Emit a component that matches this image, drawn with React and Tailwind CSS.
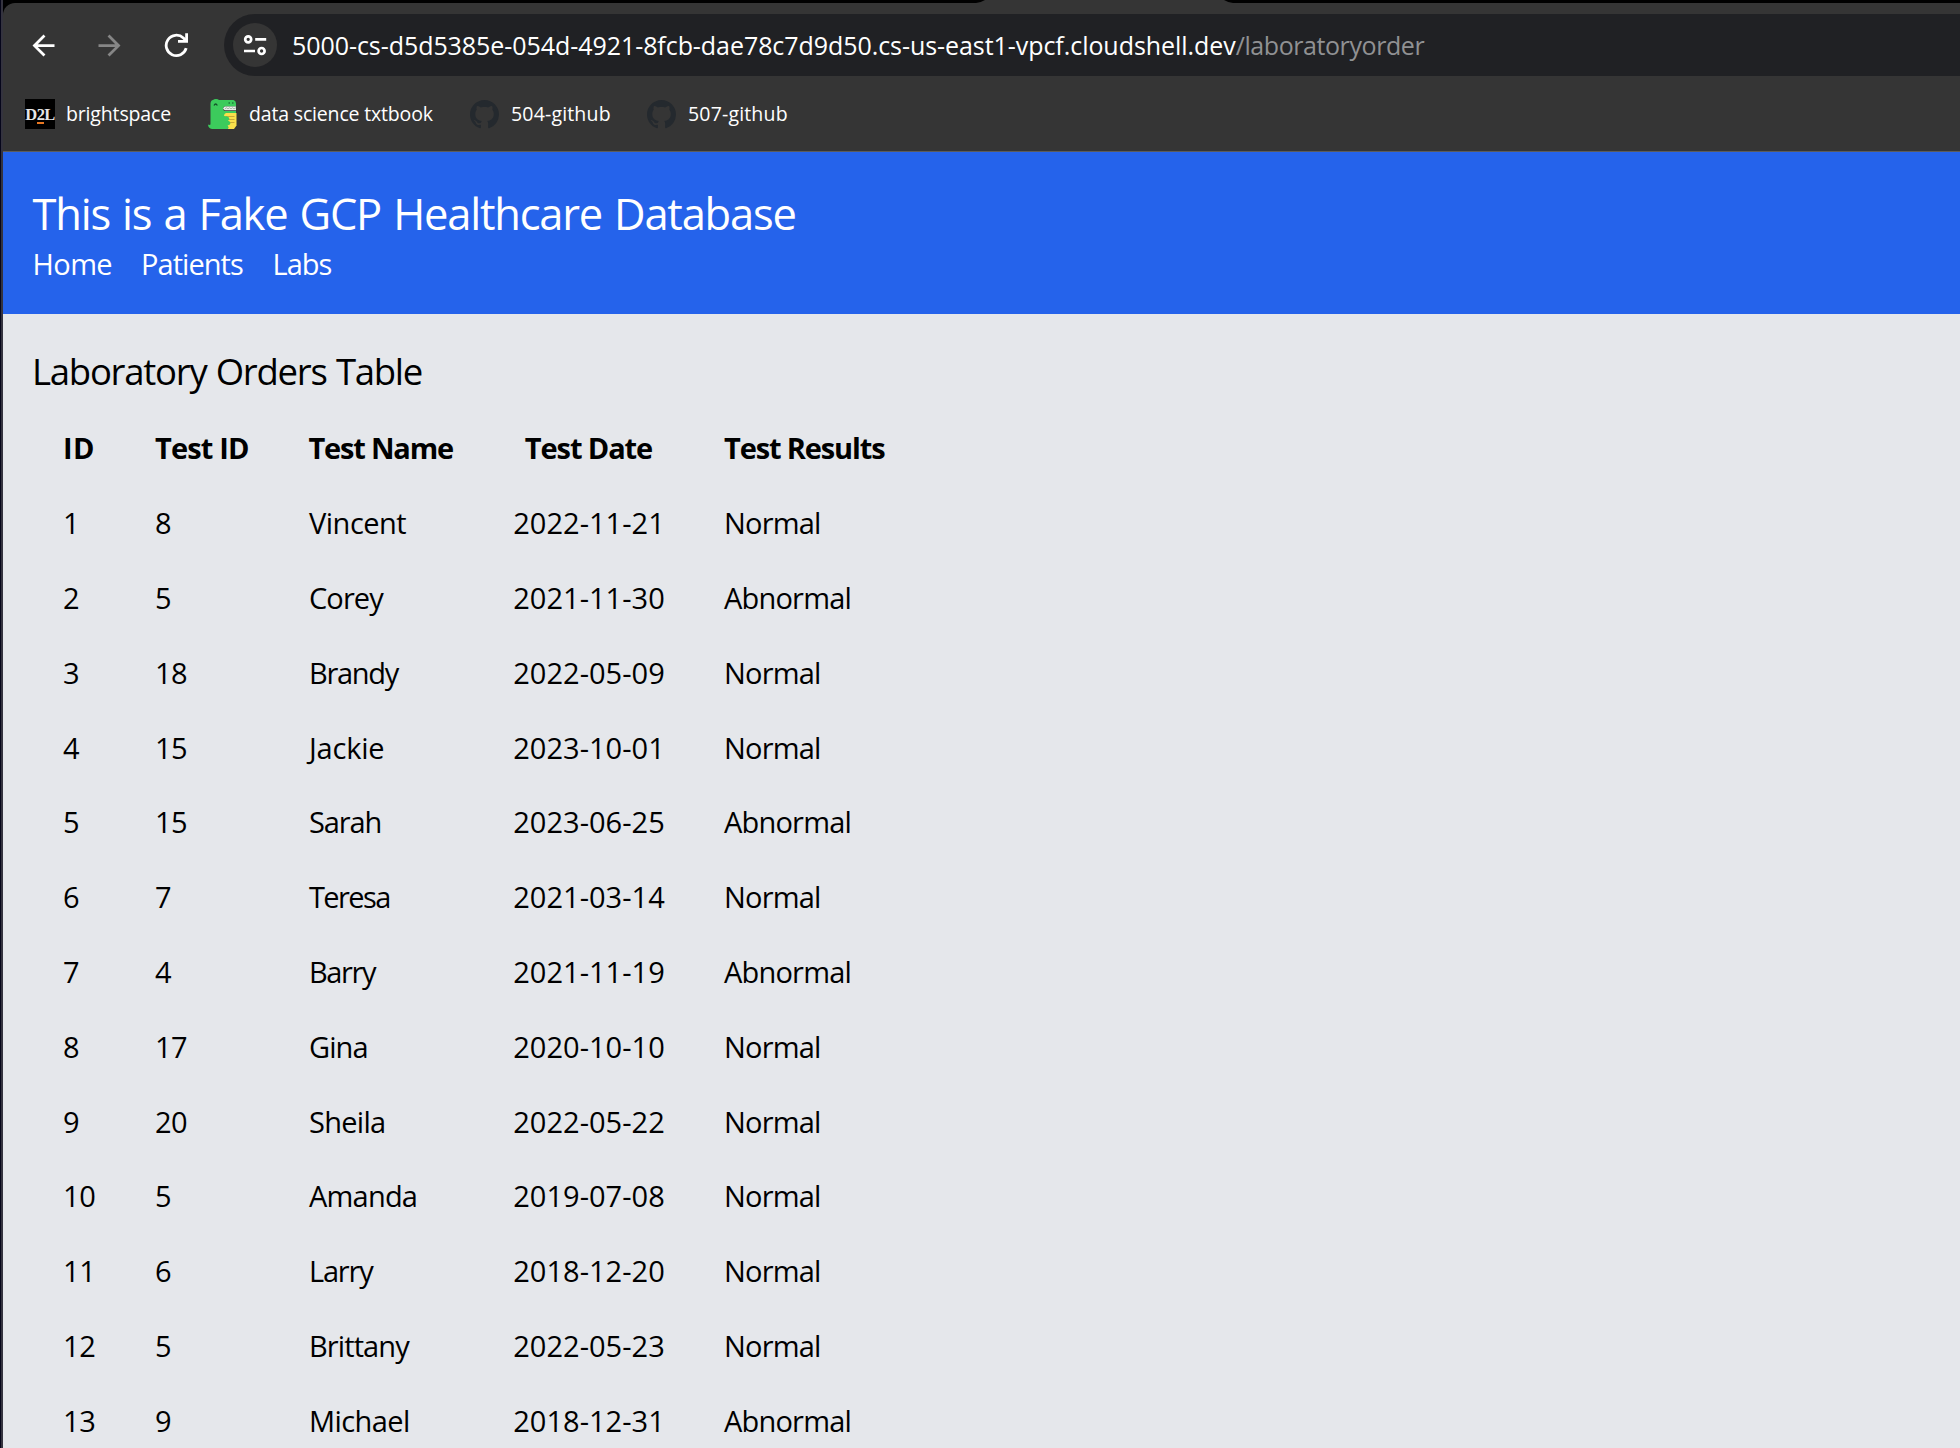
import React from "react";

const orders = [
  [1, 8, "Vincent", "2022-11-21", "Normal", "tracking-[-0.5px]"],
  [2, 5, "Corey", "2021-11-30", "Abnormal", "tracking-[-0.9px]"],
  [3, 18, "Brandy", "2022-05-09", "Normal", "tracking-[-1.3px]"],
  [4, 15, "Jackie", "2023-10-01", "Normal", "tracking-[-0.2px]"],
  [5, 15, "Sarah", "2023-06-25", "Abnormal", "tracking-[-1.1px]"],
  [6, 7, "Teresa", "2021-03-14", "Normal", "tracking-[-1.6px]"],
  [7, 4, "Barry", "2021-11-19", "Abnormal", "tracking-[-1.4px]"],
  [8, 17, "Gina", "2020-10-10", "Normal", "tracking-[-0.9px]"],
  [9, 20, "Sheila", "2022-05-22", "Normal", "tracking-[-0.7px]"],
  [10, 5, "Amanda", "2019-07-08", "Normal", "tracking-[-0.8px]"],
  [11, 6, "Larry", "2018-12-20", "Normal", "tracking-[-1.2px]"],
  [12, 5, "Brittany", "2022-05-23", "Normal", "tracking-[-0.9px]"],
  [13, 9, "Michael", "2018-12-31", "Abnormal", "tracking-[-0.6px]"],
];

function Arrow({ className }) {
  return (
    <svg viewBox="0 0 24 24" className={className} fill="currentColor">
      <path d="M20 11H7.83l5.59-5.59L12 4l-8 8 8 8 1.41-1.41L7.83 13H20v-2z" />
    </svg>
  );
}

function Reload() {
  return (
    <svg viewBox="0 0 26 26" className="ml-[37px] size-[26px] text-white" fill="none" stroke="currentColor" strokeWidth="2.8">
      <path d="M23.2 16.2A10.2 10.2 0 1 1 20.4 6L23.2 8.8" />
      <path d="M23.6 1.2V9.4H15" />
    </svg>
  );
}

function SiteSettings() {
  return (
    <svg viewBox="0 0 24 24" className="size-6" fill="none" stroke="#fff" strokeWidth="2.7">
      <circle cx="5.2" cy="6.3" r="3" />
      <path d="M12.2 6.3H23.2M1 18H12" />
      <circle cx="18.6" cy="18" r="3" />
    </svg>
  );
}

function Octocat() {
  return (
    <svg viewBox="0 0 16 16" className="size-[29px]" fill="#24292e">
      <path d="M8 0C3.58 0 0 3.58 0 8c0 3.54 2.29 6.53 5.47 7.59.4.07.55-.17.55-.38 0-.19-.01-.82-.01-1.49-2.01.37-2.53-.49-2.69-.94-.09-.23-.48-.94-.82-1.13-.28-.15-.68-.52-.01-.53.63-.01 1.08.58 1.23.82.72 1.21 1.87.87 2.33.66.07-.52.28-.87.51-1.07-1.78-.2-3.64-.89-3.64-3.95 0-.87.31-1.59.82-2.15-.08-.2-.36-1.02.08-2.12 0 0 .67-.21 2.2.82.64-.18 1.32-.27 2-.27s1.36.09 2 .27c1.53-1.04 2.2-.82 2.2-.82.44 1.1.16 1.92.08 2.12.51.56.82 1.27.82 2.15 0 3.07-1.87 3.75-3.65 3.95.29.25.54.73.54 1.48 0 1.07-.01 1.93-.01 2.2 0 .21.15.46.55.38A8.01 8.01 0 0 0 16 8c0-4.42-3.58-8-8-8z" />
    </svg>
  );
}

function Dino() {
  return (
    <svg viewBox="0 0 30 30" className="size-[30px]">
      <path d="M16 14h12.5v12.5L26 30H16z" fill="#fae04b" />
      <path d="M18 17.5h8.5M18 20.5h8.5M18 23.5h8.5" stroke="#c9a936" strokeWidth="1.2" />
      <path d="M2.5 4.5Q2.8 1.2 5 1q1-1 3-1 2 0 3 1h14.5q2.5.6 2.5 3.5v3H17q-2 0-2 2t2 2.5h11v2H18q-2 .4-2 3 5 0 5.3 2.5.2 1.6-1.3 2 2.6.8 2.4 3.2Q22 26 19.6 26.4 21.5 28 20 30H4Q.2 29.4 0 25.5q1.2.9 2.5 0z" fill="#3ccb5c" />
      <path d="M17 7.4H28V11.3H17q-1.7-.4-1.700-2t1.700-1.900z" fill="#e9eee9" />
      <path d="M17 9.8l1.5-1 1.5 1 1.5-1 1.5 1 1.5-1 1.5 1 2-1" fill="none" stroke="#8a9a8d" strokeWidth=".7" />
      <path d="M6 6.5q1.7-3 3.3 0" fill="none" stroke="#14522a" strokeWidth="1.3" />
      <path d="M20.5 4h1.500M24 4h1.500" stroke="#1e7a3b" strokeWidth="1.3" />
    </svg>
  );
}

function D2L() {
  return (
    <span className="flex size-[30px] items-center justify-center bg-black font-['Liberation_Serif',serif] text-[16.5px] font-bold leading-[17px] tracking-[-0.6px] text-[#e6e6e6]">
      <span>D</span>
      <span className="relative">
        2
        <span className="absolute inset-x-0 bottom-[-1px] h-[2px] bg-[#e87722]" />
      </span>
      <span>L</span>
    </span>
  );
}

function Bookmark({ icon, children, className }) {
  return (
    <a className={"flex items-center whitespace-nowrap text-[19.5px] text-white " + className}>
      {icon}
      <span>{children}</span>
    </a>
  );
}

function BrowserChrome() {
  return (
    <div className="bg-black">
      <div className="flex h-[3px] justify-start pl-[973px]">
        <svg viewBox="0 0 257 3" className="h-[3px] w-[257px]" fill="#353535">
          <path d="M0 3Q5 2.500 9 0H248Q252 2.500 257 3z" />
        </svg>
      </div>
      <div className="rounded-tl-[12px] bg-[#353535]">
        <div className="flex h-[74px] items-center pt-[10px]">
          <Arrow className="ml-[24px] size-[33px] text-white" />
          <Arrow className="ml-[33px] size-[33px] rotate-180 text-[#868686]" />
          <Reload />
          <div className="ml-[35px] flex h-[62px] flex-1 items-center rounded-l-full bg-[#202124] pl-[9px]">
            <span className="flex size-11 shrink-0 items-center justify-center rounded-full bg-[#353535]">
              <SiteSettings />
            </span>
            <span className="ml-[15px] mt-px whitespace-nowrap text-[25px] tracking-[-0.06px] text-white">
              5000-cs-d5d5385e-054d-4921-8fcb-dae78c7d9d50.cs-us-east1-vpcf.cloudshell.dev
              <span className="tracking-[-0.42px] text-[#909193]">/laboratoryorder</span>
            </span>
          </div>
        </div>
        <div className="flex h-[75px] items-center border-b border-[#5c5c5c] pl-[22px]">
          <Bookmark icon={<D2L />} className="w-[183px] gap-[11px] tracking-[-0.15px]">brightspace</Bookmark>
          <Bookmark icon={<Dino />} className="w-[262px] gap-[11px] tracking-[-0.17px]">data science txtbook</Bookmark>
          <Bookmark icon={<Octocat />} className="w-[177px] gap-[12px] tracking-[0.17px]">504-github</Bookmark>
          <Bookmark icon={<Octocat />} className="gap-[12px] tracking-[0.17px]">507-github</Bookmark>
        </div>
      </div>
    </div>
  );
}

export default function App() {
  return (
    <div className="flex h-[1448px] w-[1960px] overflow-hidden font-['Open_Sans','Noto_Sans',sans-serif]">
      <div className="w-px shrink-0 bg-[#06061a]" />
      <div className="w-[2px] shrink-0 bg-[#34333f]" />
      <div className="min-w-0 flex-1 bg-gray-200 text-black">
        <BrowserChrome />
        <header className="h-[162px] bg-[#2563eb] pl-[29.5px] pt-[30px] text-white">
          <h1 className="text-[43.5px] leading-[64px] tracking-[-1.22px] [word-spacing:2px]">This is a Fake GCP Healthcare Database</h1>
          <nav className="flex text-[29px] leading-[36px]">
            <a className="w-[108.500px] tracking-[-0.6px]">Home</a>
            <a className="w-[131.500px] tracking-[-0.95px]">Patients</a>
            <a className="tracking-[-1px]">Labs</a>
          </nav>
        </header>
        <main className="pl-[29px] pt-[30px]">
          <h2 className="text-[36.5px] leading-[54px] tracking-[-1.25px] [word-spacing:1px]">Laboratory Orders Table</h2>
          <table className="ml-[2px] mt-[13px] w-[862px] table-fixed border-collapse text-[29px] leading-[44px]">
            <colgroup>
              <col className="w-[91px]" />
              <col className="w-[154px]" />
              <col className="w-[205px]" />
              <col className="w-[211px]" />
              <col className="w-[201px]" />
            </colgroup>
            <thead>
              <tr className="h-[74.8px] whitespace-nowrap text-left font-bold">
                <th className="pl-[29px] tracking-[0.3px]">ID</th>
                <th className="pl-[30px] tracking-[-0.85px]">Test ID</th>
                <th className="pl-[29.5px] tracking-[-1.2px]">Test Name</th>
                <th className="pr-[2px] text-center tracking-[-1.1px]">Test Date</th>
                <th className="pl-[29px] tracking-[-1.13px]">Test Results</th>
              </tr>
            </thead>
            <tbody>
              {orders.map(([id, test, name, date, result, tracking]) => (
                <tr key={id} className="h-[74.8px] whitespace-nowrap">
                  <td className="pl-[29px] tracking-[-0.4px]">{id}</td>
                  <td className="pl-[30px] tracking-[-0.6px]">{test}</td>
                  <td className={"pl-[30px] " + tracking}>{name}</td>
                  <td className="pr-px text-center tracking-[0.02px]">{date}</td>
                  <td className="pl-[29px] tracking-[-0.8px]">{result}</td>
                </tr>
              ))}
            </tbody>
          </table>
        </main>
      </div>
    </div>
  );
}
